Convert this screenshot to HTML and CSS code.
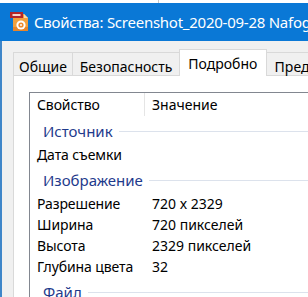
FILE: index.html
```html
<!doctype html>
<html>
<head>
<title>Свойства</title>
<meta name="viewport" content="width=device-width">
<link rel="stylesheet" href="styles.css">
</head>
<body>
<div class="strip"></div>
<div class="titlebar">
  <svg class="appicon" width="20" height="20" viewBox="0 0 20 20">
    <path d="M3 2h11l4 4v13H3z" fill="#f3a03d"/>
    <path d="M14 2v4h4z" fill="#fbd9a8"/>
    <path d="M3 15h15v4H3z" fill="#e8852a"/>
    <rect x="0" y="0" width="13" height="6" fill="#b3262a"/>
    <rect x="2.5" y="2" width="8" height="2" fill="#f6d6d0"/>
    <circle cx="11" cy="13" r="4.6" fill="#fff"/>
    <circle cx="11" cy="13" r="2.6" fill="#f08a2c"/>
    <circle cx="11" cy="13" r="1" fill="#fff"/>
  </svg>
  <span class="caption">Свойства: Screenshot_2020-09-28 Nafoga.png</span>
</div>
<div class="dialog">
  <div class="tabs">
    <div class="tab t1">Общие</div>
    <div class="tab t2">Безопасность</div>
    <div class="tab t3 sel">Подробно</div>
    <div class="tab t4">Предыдущие версии</div>
  </div>
  <div class="panel">
    <div class="list">
      <div class="head"><div class="c1">Свойство</div><div class="c2">Значение</div></div>
      <div class="group"><span>Источник</span></div>
      <div class="row"><div class="c1">Дата съемки</div><div class="c2"></div></div>
      <div class="group"><span>Изображение</span></div>
      <div class="row"><div class="c1">Разрешение</div><div class="c2">720 x 2329</div></div>
      <div class="row"><div class="c1">Ширина</div><div class="c2">720 пикселей</div></div>
      <div class="row"><div class="c1">Высота</div><div class="c2">2329 пикселей</div></div>
      <div class="row"><div class="c1">Глубина цвета</div><div class="c2">32</div></div>
      <div class="group"><span>Файл</span></div>
    </div>
  </div>
</div>
</body>
</html>
```
FILE: styles.css
```css
html, body {margin:0; padding:0; background:#fff; overflow:hidden; width:308px; height:297px}
body {font:14px "Noto Sans", "Open Sans", sans-serif; color:#000}

.strip {height:3px; width:158px; border-right:1px solid #c8c8c8; background:#fff}

.titlebar {height:38px; background:#0a78d6; display:flex; align-items:center; white-space:nowrap; color:#fff}
.appicon {margin:0 4px 0 10px; flex:none}
.caption {font-size:15px; letter-spacing:-0.25px}

.dialog {background:#f0f0f0; border-left:2px solid #3f86c9; width:420px; height:260px}
.tabs {display:flex; align-items:flex-end; padding:8px 0 0 11px; height:26px}
.tab {height:19px; padding-top:3px; border:1px solid #d9d9d9; border-bottom:0; border-right:0; text-align:center; line-height:22px; white-space:nowrap; background:#f0f0f0}
.t1 {width:59px}
.t2 {width:108px}
.t3 {width:87px}
.t4 {width:150px; text-align:left; padding-left:8px}
.tab.sel {height:23px; background:#fff; border-right:1px solid #d9d9d9; position:relative; top:1px}
.sel + .tab {border-left:0}

.panel {margin-left:11px; background:#fff; border:1px solid #d9d9d9; height:240px; padding:16px 0 0 15px}
.list {border:1px solid #828790; height:240px}
.head, .row {display:flex; height:21px; line-height:21px}
.head {height:23px; line-height:24px}
.c1 {width:108px; padding-left:7px; flex:none; letter-spacing:-0.1px}
.c2 {padding-left:7px}
.head .c1 {border-right:1px solid #e5e5e5; width:107px}
.group {display:flex; align-items:center; height:21px; line-height:21px; padding:5px 0 2px 13px; font-size:15px; color:#1e3a8c}
.group::after {content:""; flex:1; height:1px; background:#dce2ec; margin-left:6px}
```
